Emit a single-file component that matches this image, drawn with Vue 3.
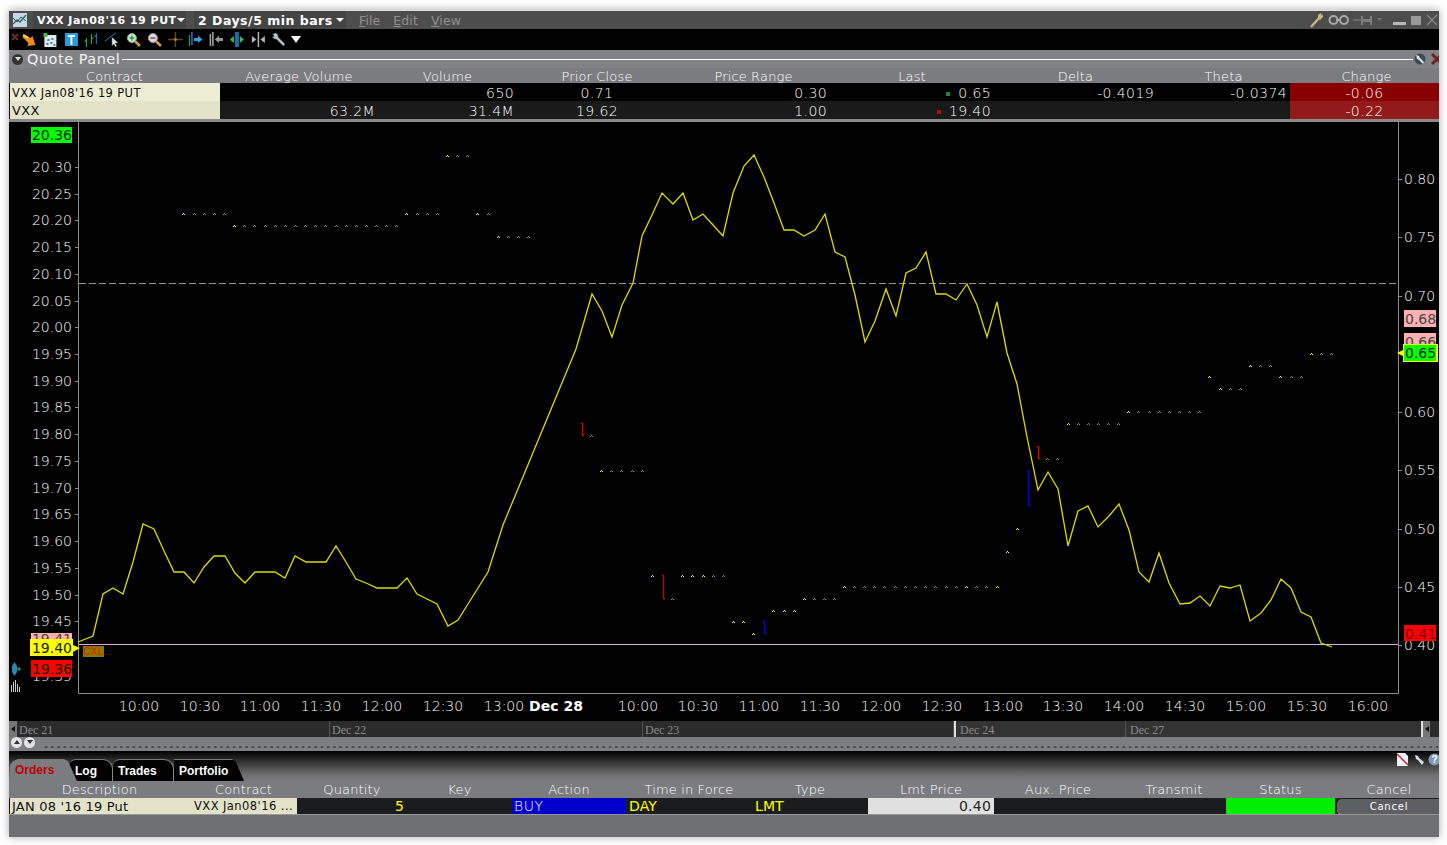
<template>
  <div class="page">
    <div class="window">
      <!-- title bar -->
      <div class="titlebar">
        <svg class="app-icon" width="14" height="14" viewBox="0 0 14 14">
          <rect width="14" height="14" fill="#c9d6e6" />
          <path d="M0 11 4 7 7 9 13 2" fill="none" stroke="#2f7d3a" stroke-width="1.5" />
          <path d="M0 5 4 9 8 4 13 8" fill="none" stroke="#2a4fb0" />
        </svg>
        <span class="title-seg seg-contract">VXX Jan08'16 19 PUT<i class="caret"></i></span>
        <span class="title-seg seg-bars">2 Days/5 min bars<i class="caret"></i></span>
        <span class="menu"><u>F</u>ile</span>
        <span class="menu"><u>E</u>dit</span>
        <span class="menu"><u>V</u>iew</span>
        <div class="title-right">
          <svg width="14" height="16" viewBox="0 0 14 16">
            <path d="M1 15 9 6" stroke="#c9b67a" stroke-width="2.4" fill="none" />
            <path d="M8 7 8 3 11 1 12 4 13 2 13 5 10 8Z" fill="#c9b67a" />
          </svg>
          <svg class="chain" width="22" height="12" viewBox="0 0 22 12">
            <circle cx="5.5" cy="6" r="4" fill="none" stroke="#a8a8a8" stroke-width="2" />
            <circle cx="16" cy="6" r="4" fill="none" stroke="#a8a8a8" stroke-width="2" />
            <path d="M8 6h5" stroke="#a8a8a8" stroke-width="2" />
          </svg>
          <svg width="30" height="12" viewBox="0 0 30 12">
            <path d="M1 6h8" stroke="#777" stroke-width="1.5" />
            <path d="M9 2h2v3h7V2h2v9h-2V8h-7v3H9Z" fill="#7d7d7d" />
            <path d="M25 4h5l-2.500 3Z" fill="#777" />
          </svg>
          <span class="win-min"></span>
          <span class="win-max"></span>
          <svg class="win-x" width="12" height="12" viewBox="0 0 12 12">
            <path d="M1 1 11 11M11 1 1 11" stroke="#8a8a8a" stroke-width="1.2" />
          </svg>
        </div>
      </div>

      <!-- toolbar -->
      <div class="toolbar">
        <svg class="tool-x" width="8" height="8" viewBox="0 0 8 8"><path d="M1 1 7 7M7 1 1 7" stroke="#6b2c2c" stroke-width="2" /></svg>
        <svg class="tool" width="14" height="14" viewBox="0 0 14 14">
          <path d="M1 1 8 5 10 3 13 12 5 13 6 10 0 4Z" fill="#f08a12" />
          <path d="M1 2 6 5" stroke="#ffe34d" stroke-width="1.500" />
        </svg>
        <svg class="tool" width="14" height="14" viewBox="0 0 14 14">
          <rect x="1" y="2" width="12" height="12" fill="#dfe9ee" />
          <rect x="0" y="0" width="4" height="4" fill="#38c038" />
          <path d="M4 6h2v2H4zM8 5h2v2H8zM3 10h2v2H3zM7 9h2v2H7zM10 11h2v2h-2z" fill="#3d7fb8" />
        </svg>
        <svg class="tool" width="13" height="13" viewBox="0 0 13 13">
          <rect width="13" height="13" fill="#2b9ad8" />
          <path d="M3 2h7v2H7.500v8h-2V4H3Z" fill="#e8f6ff" />
        </svg>
        <svg class="tool" width="14" height="14" viewBox="0 0 14 14">
          <path d="M2 5v9M7 1v10" stroke="#2fbf4a" stroke-width="1" />
          <path d="M12 0v11" stroke="#2f6fd8" stroke-width="1" />
          <path d="M0 8h2M7 5h2M10 3h2" stroke="#2fbf4a" stroke-width="1" />
        </svg>
        <svg class="tool" width="15" height="15" viewBox="0 0 15 15">
          <path d="M0 9 11 1" stroke="#2a79c4" stroke-width="1" />
          <path d="M7 5v9l2-2 1.500 3 1.500-1-1.500-3h3Z" fill="#e8e8e8" stroke="#333" stroke-width=".5" />
        </svg>
        <svg class="tool" width="15" height="15" viewBox="0 0 15 15">
          <path d="M9 9 14 14" stroke="#d99a45" stroke-width="2.500" />
          <circle cx="6" cy="6" r="4.500" fill="#cfe6d8" stroke="#9a9a9a" />
          <path d="M3.500 6h5M6 3.500v5" stroke="#22a83a" stroke-width="1.500" />
        </svg>
        <svg class="tool" width="15" height="15" viewBox="0 0 15 15">
          <path d="M9 9 14 14" stroke="#d99a45" stroke-width="2.500" />
          <circle cx="6" cy="6" r="4.500" fill="#cfdbe6" stroke="#9a9a9a" />
          <path d="M3.500 6h5" stroke="#d8342a" stroke-width="1.500" />
        </svg>
        <svg class="tool" width="15" height="15" viewBox="0 0 15 15">
          <path d="M7.500 0v15M0 7.500h15" stroke="#6b4020" stroke-width="1.500" />
          <path d="M6 7.500h3M7.500 6v3" stroke="#b5793a" stroke-width="1.500" />
        </svg>
        <svg class="tool" width="15" height="15" viewBox="0 0 15 15">
          <path d="M1.500 3v11" stroke="#2fbf4a" />
          <path d="M4 0v13" stroke="#2f6fd8" stroke-width="1.500" />
          <path d="M6 6h4V3.500L14.500 7.500 10 11V9H6Z" fill="#3d9be0" />
        </svg>
        <svg class="tool" width="15" height="15" viewBox="0 0 15 15">
          <path d="M1.500 2v12M4 0v14" stroke="#a8a8a8" stroke-width="1.500" />
          <path d="M14 6h-4V3.500L6 7.500 10 11V9h4Z" fill="#9a9a9a" />
        </svg>
        <svg class="tool" width="15" height="15" viewBox="0 0 15 15">
          <rect x="5" y="0" width="4" height="15" fill="#1c6fa8" />
          <path d="M4 4 0 7.500 4 11ZM10 4 14 7.500 10 11Z" fill="#35c04a" />
        </svg>
        <svg class="tool" width="15" height="15" viewBox="0 0 15 15">
          <path d="M7.500 0v15" stroke="#b5b5b5" stroke-width="1.500" />
          <path d="M1 4 5.500 7.500 1 11ZM14 4 9.500 7.500 14 11Z" fill="#b5b5b5" />
        </svg>
        <svg class="tool" width="15" height="15" viewBox="0 0 15 15">
          <path d="M1 2 4 1 6 3 6 5 13 12 11.500 14 4.500 7 2.500 7 0.500 5 2.500 4.500Z" fill="#b8c4cf" stroke="#5f6f80" stroke-width=".5" />
        </svg>
        <i class="tool-caret"></i>
      </div>

      <!-- quote panel -->
      <div class="panel-head">
        <span class="round-btn"><i class="down"></i></span>
        <span class="panel-title">Quote Panel</span>
        <span class="panel-rule"></span>
        <svg width="12" height="12" viewBox="0 0 12 12">
          <circle cx="6" cy="6" r="5.500" fill="#3a4a55" />
          <path d="M2 2 5 3 6 5 10 9 9 11 5 7 3 6Z" fill="#d8dee4" />
        </svg>
        <svg class="panel-x" width="8" height="12" viewBox="0 0 8 12">
          <path d="M1 1 11 11M11 1 1 11" stroke="#6e2222" stroke-width="3" />
        </svg>
      </div>
      <div class="qgrid qhead">
        <span v-for="h in quoteHeads" :key="h">{{ h }}</span>
      </div>
      <div class="qgrid qrow">
        <span class="cream mono">VXX Jan08'16 19 PUT</span>
        <span></span>
        <span class="r">650</span>
        <span class="c">0.71</span>
        <span class="r">0.30</span>
        <span class="r"><i class="dot green"></i>0.65</span>
        <span class="r">-0.4019</span>
        <span class="r">-0.0374</span>
        <span class="c chg">-0.06</span>
      </div>
      <div class="qgrid qrow alt">
        <span class="cream2">VXX</span>
        <span class="r">63.2M</span>
        <span class="r">31.4M</span>
        <span class="c">19.62</span>
        <span class="r">1.00</span>
        <span class="r"><i class="dot red"></i>19.40</span>
        <span></span>
        <span></span>
        <span class="c chg2">-0.22</span>
      </div>
      <div class="sep"></div>

      <!-- chart -->
      <svg class="chart" width="1430" height="599" viewBox="9 122 1430 599">
        <path d="M78.500 122V693.500H1398.500V122" fill="none" stroke="#8c8c8c" />
        <g v-for="t in leftTicks" :key="t.label">
          <path :d="`M75 ${t.y}.5h3`" stroke="#8c8c8c" />
          <text x="72" :y="t.y + 5" text-anchor="end" class="ax">{{ t.label }}</text>
        </g>
        <g v-for="t in rightTicks" :key="t.label">
          <path :d="`M1399 ${t.y}.5h3`" stroke="#8c8c8c" />
          <text x="1404" :y="t.y + 5" class="ax">{{ t.label }}</text>
        </g>
        <text v-for="t in timeTicks" :key="t.x" :x="t.x" y="711" text-anchor="middle" class="ax">{{ t.label }}</text>
        <text x="556" y="711" text-anchor="middle" class="ax bold">Dec 28</text>

        <path d="M79 283.500H1398" stroke="#969696" stroke-dasharray="7 3" />
        <path d="M79 644.500H1398" stroke="#d8b0d8" />
        <polyline :points="linePoints" fill="none" stroke="#dcdc00" stroke-width="1.300" />
        <path v-for="m in markers" :key="m.x + '-' + m.y" :d="`M${m.x - 2} ${m.y}h1v1h-1zM${m.x - 1} ${m.y - 1}h1v1h-1zM${m.x} ${m.y}h1v1h-1z`" :fill="m.c" shape-rendering="crispEdges" />
        <path v-for="b in bars" :key="b.x" :d="`M${b.x - 1} ${b.y1}.5h1M${b.x}.5 ${b.y1}V${b.y2}M${b.x} ${b.y2}.5h2`" :stroke="b.c" stroke-width="1.300" fill="none" />

        <!-- price tags, left -->
        <rect x="31" y="127" width="41" height="16" fill="#00ff00" />
        <text x="72" y="140" text-anchor="end" class="ax dark">20.36</text>
        <rect x="31" y="633" width="41" height="8" fill="#ffb0b0" />
        <text x="72" y="644" text-anchor="end" class="ax dark2">19.41</text>
        <path d="M30 639H73V645L80 648 73 652V656H30Z" fill="#ffff00" />
        <text x="72" y="653" text-anchor="end" class="ax dark">19.40</text>
        <rect x="83" y="646" width="21" height="11" fill="#7f7f00" />
        <text x="93.500" y="655" text-anchor="middle" class="cxl">CXL</text>
        <text x="72" y="681" text-anchor="end" class="ax">19.35</text>
        <rect x="31" y="660" width="41" height="17" fill="#ff0000" />
        <text x="72" y="674" text-anchor="end" class="ax dark">19.36</text>

        <!-- price tags, right -->
        <rect x="1404" y="310" width="32" height="17" fill="#ffb0b0" />
        <text x="1405" y="324" class="ax dark2">0.68</text>
        <rect x="1404" y="333" width="32" height="12" fill="#ffb0b0" />
        <text x="1405" y="347" class="ax dark2">0.66</text>
        <path d="M1403 344H1438V362H1403V356L1397 353 1403 350Z" fill="#ffff00" />
        <rect x="1404" y="345" width="32" height="16" fill="#00ff00" />
        <text x="1405" y="358" class="ax dark">0.65</text>
        <rect x="1404" y="625" width="32" height="16" fill="#ff0000" />
        <text x="1405" y="639" class="ax darkred">0.41</text>

        <!-- side icons -->
        <path d="M14.500 662 17 666V672L14.500 676 12 672V666Z" fill="#2a88b8" />
        <path d="M17 669h4M19 667v4" stroke="#39c04a" />
        <path d="M11.500 692V685M13.500 692V682M15.500 692V680M17.500 692V684M19.500 692V687" stroke="#c8c8c8" />
      </svg>

      <!-- navigator strip -->
      <div class="navstrip">
        <span class="nav-left"><i class="left"></i></span>
        <span class="nav-seg n1">Dec 21</span>
        <span class="nav-seg n2">Dec 22</span>
        <span class="nav-seg n3">Dec 23</span>
        <span class="nav-seg on n4">Dec 24</span>
        <span class="nav-seg on n5">Dec 27</span>
        <span class="nav-left nav-right"><i class="left"></i></span>
      </div>
      <div class="splitter">
        <span class="round-btn small"><i class="up"></i></span>
        <span class="round-btn small"><i class="down"></i></span>
        <span class="dots"></span>
      </div>

      <!-- orders -->
      <div class="tabbar">
        <span class="tab active">Orders</span>
        <span class="tab t-log">Log</span>
        <span class="tab t-trades">Trades</span>
        <span class="tab t-port">Portfolio</span>
        <div class="tab-icons">
          <svg width="11" height="13" viewBox="0 0 11 13">
            <path d="M0 0H8L11 3V13H0Z" fill="#e8f0f8" />
            <path d="M0 1 11 12" stroke="#e02020" stroke-width="1.500" />
          </svg>
          <svg class="tab-wrench" width="11" height="11" viewBox="0 0 11 11">
            <path d="M1 1 4 2 5 4 10 8 8 11 4 6 2 5Z" fill="#d8dee4" />
          </svg>
          <svg width="11" height="13" viewBox="0 0 11 13">
            <circle cx="6.500" cy="6.500" r="6" fill="#7f9ab8" />
            <text x="6.500" y="10" text-anchor="middle" class="help">?</text>
          </svg>
        </div>
      </div>
      <div class="ogrid ohead">
        <span v-for="h in orderHeads" :key="h">{{ h }}</span>
      </div>
      <div class="ogrid orow">
        <span class="ocream">JAN 08 '16 19 Put</span>
        <span class="ocream r2 mono2">VXX Jan08'16 ...</span>
        <span class="qty">5</span>
        <span></span>
        <span class="buy">BUY</span>
        <span class="yel">DAY</span>
        <span class="yel">LMT</span>
        <span class="lmt">0.40</span>
        <span></span>
        <span></span>
        <span class="status"></span>
        <span class="cancel"><b>Cancel</b></span>
      </div>
      <div class="foot"></div>
    </div>
  </div>
</template>

<script setup>
const quoteHeads = ['Contract', 'Average Volume', 'Volume', 'Prior Close', 'Price Range', 'Last', 'Delta', 'Theta', 'Change']
const orderHeads = ['Description', 'Contract', 'Quantity', 'Key', 'Action', 'Time in Force', 'Type', 'Lmt Price', 'Aux. Price', 'Transmit', 'Status', 'Cancel']

// price axes
const leftTicks = []
for (let i = 0; i <= 18; i++) {
  leftTicks.push({ label: (20.3 - i * 0.05).toFixed(2), y: Math.round(167 + i * 26.72) })
}
const rightTicks = []
for (let i = 0; i <= 8; i++) {
  // 0.65 sits under the green price tag
  if (i !== 3) rightTicks.push({ label: (0.8 - i * 0.05).toFixed(2), y: Math.round(179 + i * 58.25) })
}

const dayOne = [['10:00', 139], ['10:30', 200], ['11:00', 260], ['11:30', 321], ['12:00', 382], ['12:30', 443], ['13:00', 504]]
const dayTwo = [
  ['10:00', 638], ['10:30', 698], ['11:00', 759], ['11:30', 820], ['12:00', 881], ['12:30', 942], ['13:00', 1003],
  ['13:30', 1063], ['14:00', 1124], ['14:30', 1185], ['15:00', 1246], ['15:30', 1307], ['16:00', 1368],
]
const timeTicks = [...dayOne, ...dayTwo].map(([label, x]) => ({ label, x }))

const linePoints = [
  [78, 642], [93, 636], [103, 594], [113, 588], [123, 594], [133, 562], [143, 524], [154, 529], [164, 551], [174, 572],
  [184, 572], [194, 583], [204, 567], [214, 556], [225, 556], [235, 573], [245, 583], [255, 572], [275, 572], [285, 578],
  [295, 556], [306, 562], [326, 562], [336, 546], [346, 562], [356, 579], [366, 583], [377, 588], [397, 588], [407, 578],
  [417, 594], [427, 599], [437, 604], [448, 626], [458, 620], [468, 604], [478, 588], [488, 572], [503, 525], [576, 349],
  [592, 294], [602, 311], [612, 337], [622, 305], [633, 283], [642, 236], [652, 215], [662, 193], [673, 204], [683, 193],
  [693, 220], [703, 214], [713, 225], [723, 236], [733, 193], [744, 166], [754, 155], [764, 177], [774, 203], [784, 230],
  [794, 230], [804, 236], [815, 230], [825, 214], [835, 252], [845, 257], [855, 295], [865, 342], [875, 321], [886, 289],
  [896, 316], [906, 273], [916, 268], [926, 252], [936, 294], [946, 294], [956, 300], [967, 284], [977, 305], [987, 337],
  [997, 302], [1007, 353], [1017, 384], [1027, 437], [1038, 490], [1048, 472], [1058, 489], [1068, 546], [1078, 511], [1088, 506],
  [1098, 527], [1109, 516], [1119, 504], [1129, 530], [1139, 572], [1149, 582], [1159, 553], [1169, 583], [1180, 604], [1190, 603],
  [1200, 596], [1210, 606], [1220, 586], [1230, 588], [1240, 585], [1250, 621], [1261, 613], [1271, 600], [1281, 579], [1291, 588],
  [1301, 612], [1311, 617], [1321, 643], [1332, 647],
].map((p) => p.join(',')).join(' ')

const YEL = '#ffff00'
const GREY = '#8a8a8a'
// [y, yellow x's, grey x's]
const markerRows = [
  [214, [184], [195, 205, 215, 225]],
  [226, [235], [245, 255, 266, 276, 286, 296, 306, 316, 326, 337, 347, 357, 367, 377, 387, 397]],
  [214, [407], [418, 428, 438]],
  [156, [448], [458, 468]],
  [214, [478], [489]],
  [237, [499], [509, 519, 529]],
  [436, [], [592]],
  [471, [602], [612, 622, 633, 643]],
  [576, [653, 683, 693, 704], [714, 724]],
  [599, [], [673]],
  [622, [734, 744], []],
  [634, [754], []],
  [611, [774, 785, 795], []],
  [599, [805], [815, 825, 835]],
  [587, [845, 967, 998], [855, 865, 875, 885, 896, 906, 916, 926, 936, 947, 957, 977, 987]],
  [552, [1008], []],
  [529, [1018], []],
  [459, [], [1048, 1058]],
  [424, [1069], [1079, 1089, 1099, 1109, 1119]],
  [412, [1129], [1139, 1150, 1160, 1170, 1180, 1190, 1200]],
  [377, [1210], []],
  [389, [1221], [1231, 1241]],
  [366, [1251], [1261, 1271]],
  [377, [1281], [1292, 1302]],
  [354, [1312], [1322, 1332]],
]
const markers = []
markerRows.forEach(([y, yellow, grey]) => {
  yellow.forEach((x) => markers.push({ x, y, c: YEL }))
  grey.forEach((x) => markers.push({ x, y, c: GREY }))
})

const bars = [
  { x: 582, y1: 423, y2: 435, c: '#e00000' },
  { x: 663, y1: 575, y2: 598, c: '#c00000' },
  { x: 764, y1: 621, y2: 633, c: '#0000ff' },
  { x: 1028, y1: 470, y2: 505, c: '#0000ff' },
  { x: 1038, y1: 446, y2: 458, c: '#e00000' },
]
</script>

<style scoped>
.page {
  width: 1447px;
  height: 845px;
  padding: 10px 8px 8px 9px;
  box-sizing: border-box;
  overflow: hidden;
  background: #fff;
}

.window {
  width: 1430px;
  height: 827px;
  display: flex;
  flex-direction: column;
  overflow: hidden;
  background: #6f7072;
  box-shadow: 0 0 8px rgba(0, 0, 0, 0.35);
  font-family: "DejaVu Sans", sans-serif;
  font-size: 13px;
  font-weight: 200;
  letter-spacing: 0.15px;
  color: #fff;
}

.titlebar {
  height: 18px;
  flex: none;
  display: flex;
  align-items: center;
  background: #4d4d4d;
  border-top: 1px solid #dcdcdc;
  box-sizing: content-box;
  padding-left: 4px;
}
.app-icon {
  margin-right: 6px;
}
.title-seg {
  font-weight: bold;
  display: flex;
  align-items: center;
  height: 100%;
  background: #444;
  padding-left: 4px;
  white-space: nowrap;
  box-sizing: border-box;
}
.seg-contract {
  width: 153px;
  font-size: 11px;
  letter-spacing: 0.5px;
}
.seg-contract .caret {
  margin-left: 0;
}
.seg-bars {
  width: 152px;
  margin-left: 8px;
  font-size: 12.500px;
  letter-spacing: 0.5px;
}
.caret {
  display: inline-block;
  border-left: 4px solid transparent;
  border-right: 4px solid transparent;
  border-top: 4px solid #fff;
  margin-left: 3px;
}
.menu {
  color: #8f8f8f;
  margin-left: 13px;
  font-size: 12.500px;
  font-weight: normal;
  letter-spacing: 0.1px;
}
.title-right {
  margin-left: auto;
  display: flex;
  align-items: center;
  padding-right: 1px;
}
.chain {
  margin: 0 2px 0 4px;
}
.win-min {
  width: 13px;
  height: 3px;
  background: #b8b8b8;
  margin: 7px 5px 0 11px;
}
.win-max {
  width: 10px;
  height: 9px;
  background: #9a9a9a;
  margin-right: 5px;
}

.toolbar {
  height: 21px;
  flex: none;
  background: #000;
  display: flex;
  align-items: center;
  padding-left: 2px;
}
.tool-x {
  margin: 0 0 6px 0;
}
.tool {
  width: 20.800px;
  flex: none;
}
.tool-caret {
  border-left: 5px solid transparent;
  border-right: 5px solid transparent;
  border-top: 7px solid #fff;
  margin-left: 2px;
}

.panel-head {
  height: 18px;
  flex: none;
  display: flex;
  align-items: center;
  background: #808285;
  padding: 0 0 0 3px;
}
.round-btn {
  width: 11px;
  height: 11px;
  border-radius: 50%;
  background: #333;
  display: flex;
  align-items: center;
  justify-content: center;
  flex: none;
}
.round-btn.small {
  background: #e4e4e4;
  margin-right: 2px;
}
.down {
  border-left: 3px solid transparent;
  border-right: 3px solid transparent;
  border-top: 4px solid #ddd;
}
.small .down {
  border-top-color: #333;
}
.up {
  border-left: 3px solid transparent;
  border-right: 3px solid transparent;
  border-bottom: 4px solid #333;
}
.panel-title {
  font-size: 14.500px;
  font-weight: normal;
  margin-left: 4px;
  letter-spacing: 0.5px;
  color: #f2f2f2;
}
.panel-rule {
  flex: 1;
  height: 1px;
  background: #fff;
  margin: 0 1px 0 2px;
}
.panel-x {
  margin: 0 0 0 5px;
}

.qgrid {
  display: grid;
  grid-template-columns: 211px 158px 139px 160px 153px 164px 163px 133px 149px;
  flex: none;
}
.qhead {
  height: 15px;
  background: #7a7c80;
  line-height: 18px;
  overflow: hidden;
}
.qhead span {
  text-align: center;
  color: #fff;
}
.qhead span:last-child {
  padding-left: 4px;
}
.qrow {
  height: 18px;
  background: #000;
  line-height: 20px;
  font-size: 14px;
  letter-spacing: 0.4px;
}
.qrow.alt {
  background: #1a1a1a;
}
.qrow span {
  display: block;
  white-space: nowrap;
  overflow: hidden;
}
.r {
  text-align: right;
  padding-right: 3px;
}
.c {
  text-align: center;
}
.cream {
  background: #ededd3;
  color: #111;
  padding-left: 2px;
  margin-left: 1px;
  font-weight: normal;
}
.cream2 {
  background: #e4e3c9;
  color: #111;
  padding-left: 2px;
  margin-left: 1px;
  font-size: 13px;
  font-weight: normal;
}
.qrow .mono {
  font-size: 11.500px;
  letter-spacing: 0.37px;
}
.chg {
  background: #880000;
}
.chg2 {
  background: #931a1a;
}
.dot {
  display: inline-block;
  width: 4px;
  height: 4px;
  margin: 0 8px 2px 0;
}
.dot.green {
  background: #2f7d3a;
}
.dot.red {
  background: #b01010;
}
.sep {
  height: 3px;
  flex: none;
  background: #8a8a8a;
}

.chart {
  display: block;
  flex: none;
  background: #000;
}
.ax {
  font-family: "DejaVu Sans", sans-serif;
  font-size: 14px;
  font-weight: 200;
  letter-spacing: 0;
  fill: #fff;
}
.ax.bold {
  font-weight: bold;
}
.ax.dark {
  font-weight: normal;
  fill: #0a2a0a;
}
.ax.dark2 {
  font-weight: normal;
  fill: #444;
}
.ax.darkred {
  font-weight: normal;
  fill: #7a0000;
}
.cxl {
  font-family: "Liberation Sans", sans-serif;
  font-size: 10px;
  font-weight: normal;
  letter-spacing: 0;
  fill: #ff0000;
}
.help {
  font-family: "Liberation Sans", sans-serif;
  font-size: 10px;
  font-weight: bold;
  fill: #fff;
}

.navstrip {
  height: 16px;
  flex: none;
  display: flex;
  background: #2b2b2b;
  font-family: "Liberation Serif", serif;
  font-size: 12px;
  font-weight: normal;
  letter-spacing: 0;
  line-height: 18px;
  color: #8a8a8a;
}
.nav-left {
  width: 8px;
  background: #777;
  display: flex;
  align-items: center;
  justify-content: center;
  flex: none;
}
.nav-right {
  width: 7px;
}
.left {
  border-top: 3px solid transparent;
  border-bottom: 3px solid transparent;
  border-right: 4px solid #111;
}
.nav-seg {
  box-sizing: border-box;
  border-right: 1px solid #555;
  padding-left: 2px;
  flex: none;
}
.n1,
.n2 {
  width: 313px;
}
.n3 {
  width: 311px;
}
.n4 {
  width: 172px;
  border-left: 2px solid #ddd;
}
.n5 {
  width: 297px;
  border-right: 2px solid #ddd;
}
.nav-seg.on {
  background: #333;
  padding-left: 4px;
}

.splitter {
  height: 14px;
  flex: none;
  display: flex;
  align-items: center;
  padding-left: 2px;
  background: #7c7e82;
  box-sizing: border-box;
  padding-bottom: 4px;
}
.dots {
  flex: 1;
  height: 4px;
  margin: 10px 0 0 6px;
  background-image: radial-gradient(circle, #4a4b4f 1px, transparent 1.300px);
  background-size: 6.280px 4px;
}

.tabbar {
  height: 30px;
  flex: none;
  display: flex;
  align-items: flex-end;
  background: linear-gradient(#000 0%, #2a2a2a 30%, #6a6a6a 75%, #7a7c80 100%);
  font-family: "Liberation Sans", sans-serif;
  font-weight: bold;
  letter-spacing: 0;
  font-size: 12px;
}
.tab {
  height: 22px;
  line-height: 22px;
  background: #000;
  border-top: 1px solid #777;
  border-radius: 7px 10px 0 0;
  box-sizing: border-box;
  flex: none;
}
.tab.active {
  width: 67px;
  background: #7a7c80;
  color: #c00000;
  margin-left: 1px;
  padding-left: 5px;
  border: none;
  position: relative;
  z-index: 1;
  clip-path: polygon(0 100%, 0 6px, 3px 2px, 8px 0, 54px 0, 58px 2px, 100% 100%);
}
.t-log {
  width: 44px;
  margin-left: -8px;
  padding-left: 6px;
  border-right: 1px solid #888;
}
.t-trades {
  width: 61px;
  padding-left: 5px;
  border-right: 1px solid #888;
}
.t-port {
  width: 70px;
  padding-left: 5px;
  border-radius: 0;
  clip-path: polygon(0 0, 58px 0, 62px 3px, 100% 100%, 0 100%);
}
.tab-icons {
  margin: 2px 0 0 auto;
  display: flex;
  align-self: flex-start;
  align-items: center;
}
.tab-wrench {
  margin: 0 3px 0 6px;
}

.ogrid {
  display: grid;
  grid-template-columns: 181px 107px 110px 105px 114px 126px 116px 126px 128px 104px 109px 104px;
  flex: none;
}
.ohead {
  height: 17px;
  background: #7a7c80;
  line-height: 18px;
  overflow: hidden;
}
.ohead span {
  text-align: center;
  color: #fff;
}
.ohead span:last-child {
  padding-left: 4px;
}
.orow {
  height: 16px;
  background: #1b1c1e;
  line-height: 17px;
  overflow: hidden;
}
.orow span {
  white-space: nowrap;
  overflow: hidden;
}
.ocream {
  background: #e4e3c9;
  color: #111;
  padding-left: 2px;
  font-weight: normal;
  letter-spacing: 0.2px;
}
.orow span:first-child {
  margin-left: 1px;
}
.r2 {
  padding-left: 4px;
}
.mono2 {
  font-size: 11.500px;
  letter-spacing: 0.44px;
}
.qty {
  color: #ffff00;
  text-align: right;
  padding-right: 3px;
  font-size: 14px;
  font-weight: normal;
}
.buy {
  background: #0000cc;
  padding-left: 2px;
  font-size: 14px;
  letter-spacing: 0.6px;
}
.yel {
  color: #ffff00;
  padding-left: 3px;
  font-size: 14px;
  font-weight: normal;
  letter-spacing: 0.1px;
}
.lmt {
  background: #e0e0e0;
  color: #222;
  text-align: right;
  padding-right: 3px;
  font-size: 14px;
  font-weight: normal;
  letter-spacing: 0.2px;
}
.status {
  background: #00ee00;
}
.cancel {
  padding-left: 2px;
}
.cancel b {
  display: block;
  height: 15px;
  margin-top: 1px;
  font-weight: normal;
  font-size: 10px;
  line-height: 15px;
  letter-spacing: 0.8px;
  text-align: center;
  padding-left: 2px;
  border-radius: 5px 0 0 5px;
  background: #5e5f62;
  border-bottom: 1px solid #aaa;
}
.foot {
  flex: 1;
  background: #6f7072;
  border-top: 1px solid #999;
}
</style>

<style>
html,
body {
  margin: 0;
  background: #fff;
  overflow: hidden;
}
</style>
